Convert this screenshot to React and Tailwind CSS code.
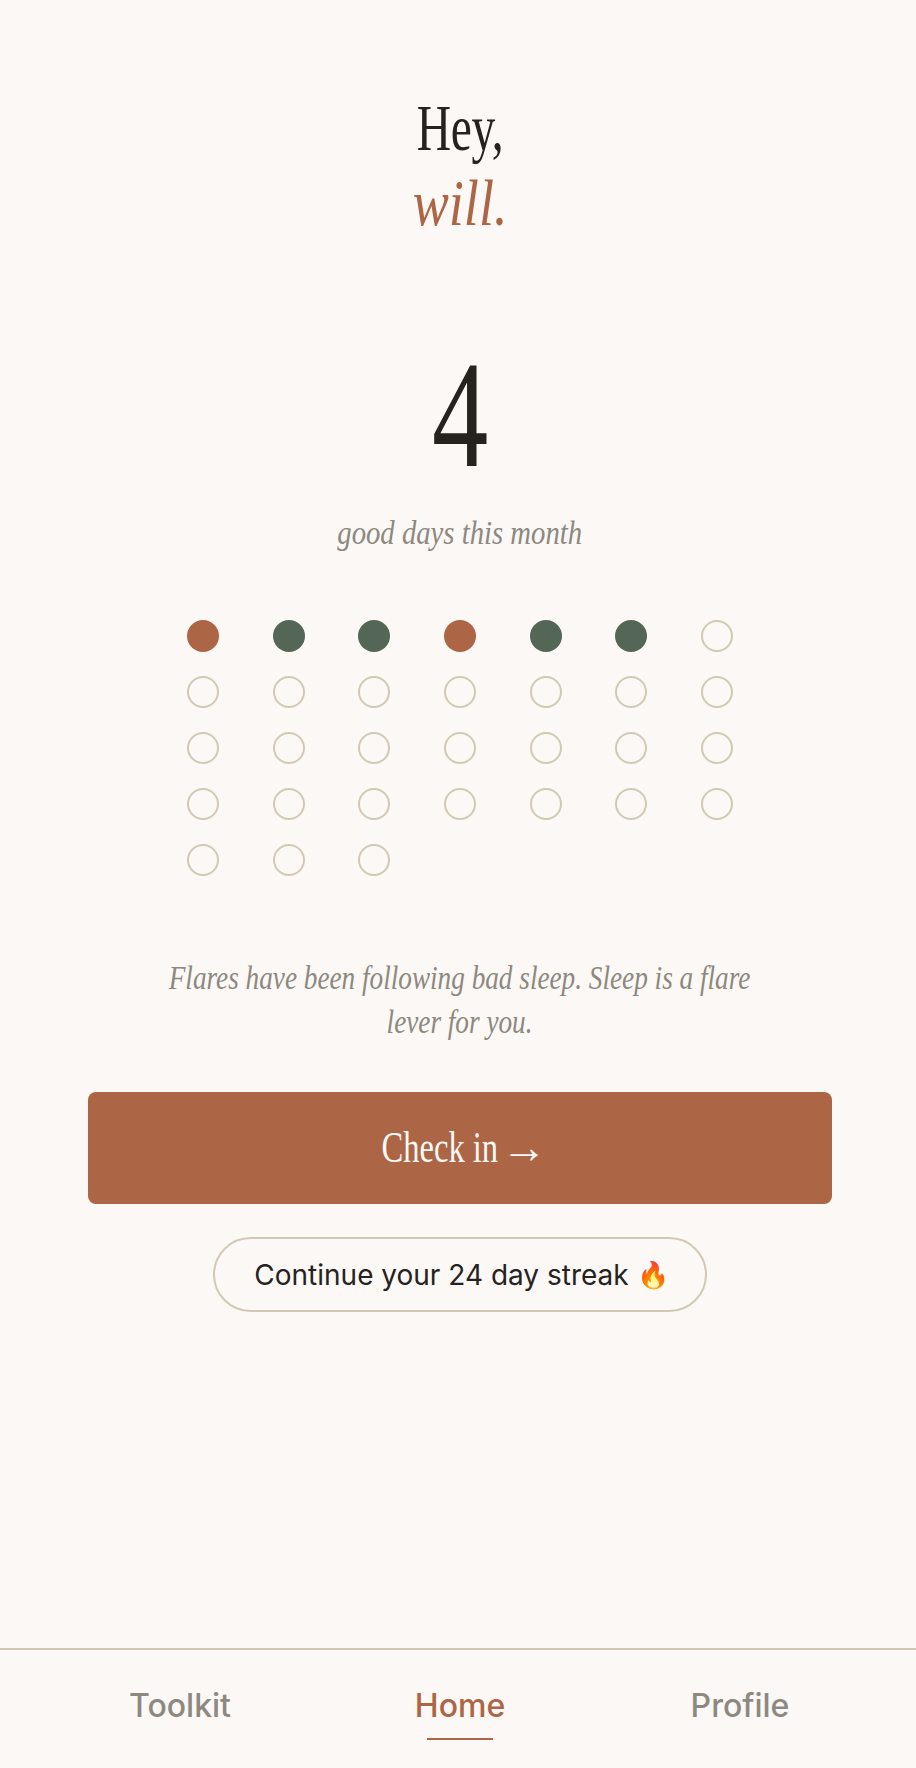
const days = ["r","g","g","r","g","g",...Array(25).fill("e")];
function Dot({ k }) {
  const cls = k === "r" ? "bg-[#ac6545]" : k === "g" ? "bg-[#546656]" : "border-2 border-[#d1c9b3]";
  return <div className={`w-8 h-8 rounded-full ${cls}`} />;
}
export default function App() {
  return (
    <div className="w-full overflow-hidden">
      <div className="w-[920px] h-[1768px] bg-[#fbf8f5] flex flex-col font-['Inter',sans-serif]">
        <main className="flex-1 flex flex-col items-center px-[88px] pt-[90px]">
          <h1 className="font-['Liberation_Serif',serif] font-normal text-[66px] leading-[75px] text-center text-[#26221e]">
            <span className="block scale-x-[0.72] tracking-[-0.5px]">Hey,</span>
            <span className="block scale-x-[0.82] italic text-[#ac6545]">will.</span>
          </h1>
          <div className="mt-[99px] font-['Liberation_Serif',serif] text-[152px] leading-[152px] text-[#26221e] scale-x-[0.74]">4</div>
          <p className="mt-[20px] font-['Liberation_Serif',serif] italic text-[33px] leading-[44px] text-[#8d8880] scale-x-[0.87]">good days this month</p>
          <div className="mt-[65px] w-[600px] grid grid-cols-7 gap-y-6 justify-items-center">
            {days.map((k, i) => <Dot key={i} k={k} />)}
          </div>
          <p className="mt-[80px] font-['Liberation_Serif',serif] italic text-[33px] leading-[44px] text-center text-[#8d8880] whitespace-nowrap scale-x-[0.825]">
            Flares have been following bad sleep. Sleep is a flare<br />lever for you.
          </p>
          <button className="mt-[48px] w-full h-[112px] shrink-0 rounded-lg bg-[#ac6545] text-[#fcf9f6] font-['Liberation_Serif',serif] text-[44px] flex items-center justify-center gap-[9px] pl-[6px]">
            <span className="inline-block scale-x-[0.74] -mx-[18px]">Check in</span>
            <span className="text-[46px] leading-none -ml-[8px]">→</span>
          </button>
          <div className="mt-[33px] w-[494px] h-[75px] shrink-0 rounded-full border-2 border-[#d1c9b3] flex items-center justify-center gap-2 pl-[3px] text-[28px] text-[#26221e]">
            <span>Continue your 24 day streak</span>
            <span className="text-[26px]">🔥</span>
          </div>
        </main>
        <nav className="h-[120px] shrink-0 border-t-2 border-[#d1c9b3] grid grid-cols-3 justify-items-center px-10 pt-[32px] text-[32px] font-medium leading-[48px] text-[#8d8880]">
          <a>Toolkit</a>
          <a className="relative text-[#ac6545]">Home<span className="absolute left-3 right-3 top-[56px] h-0.5 bg-[#ac6545]" /></a>
          <a>Profile</a>
        </nav>
      </div>
    </div>
  );
}
